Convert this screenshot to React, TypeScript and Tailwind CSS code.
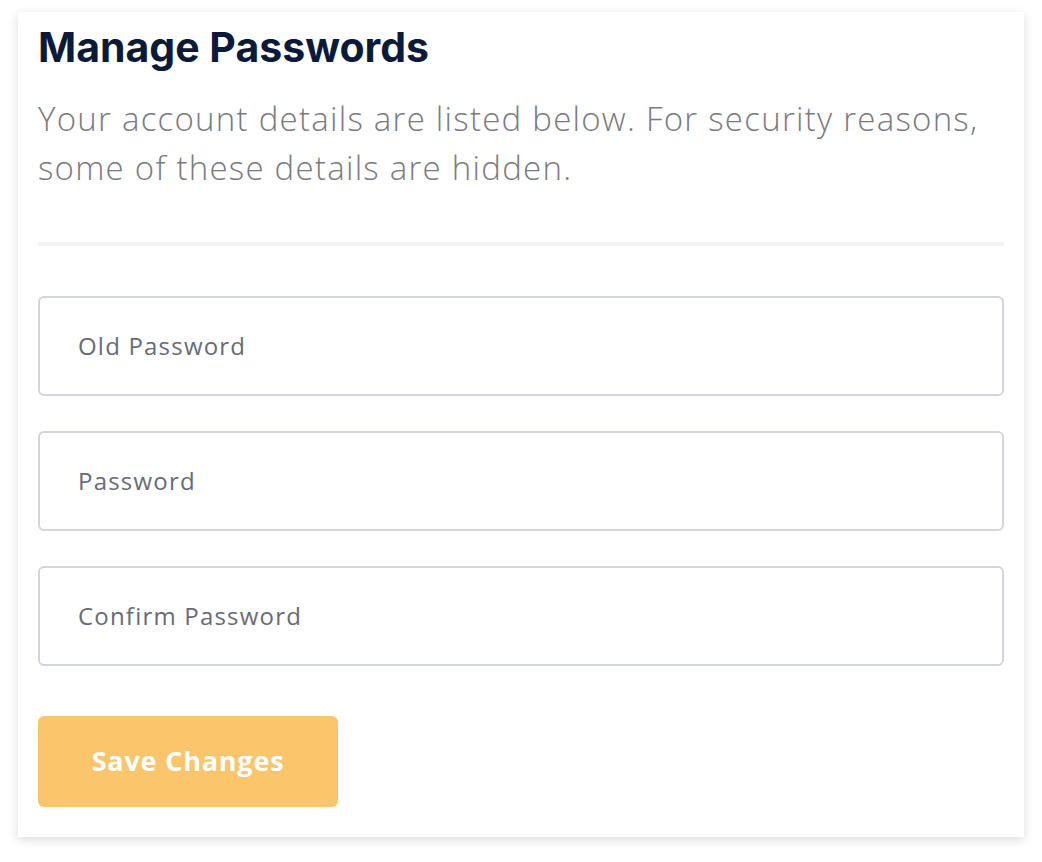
/* ── Manage Passwords card ─────────────────────────────── */

const fields = ['Old Password', 'Password', 'Confirm Password'];

export default function App() {
  return (
    <div className="min-h-screen bg-white pt-[12px] pl-[18px]">
      <div className="w-[1006px] bg-white px-[20px] pt-[11px] pb-[30px] shadow-[0_3px_10px_rgba(0,0,0,0.14)]">
        {/* Header */}
        <h1 className="font-['Inter',sans-serif] text-[41px] leading-[48px] font-bold text-[#0b1a38]">
          Manage Passwords
        </h1>
        <p className="mt-[23px] font-['Open_Sans',sans-serif] text-[33px] leading-[49px] font-light tracking-[1.25px] text-[#7a7a80]">
          Your account details are listed below. For security reasons,
          <br />
          some of these details are hidden.
        </p>

        <div className="mt-[50px] h-[4px] bg-[#f2f2f3]" />

        {/* Fields */}
        <div className="mt-[50px] flex flex-col gap-[35px]">
          {fields.map((f) => (
            <div
              key={f}
              className="flex h-[100px] items-center rounded-[6px] border-2 border-[#d3d5dc] px-[38px]"
            >
              <span className="font-['Open_Sans',sans-serif] text-[24px] font-medium tracking-[1.2px] text-[#686b76]">{f}</span>
            </div>
          ))}
        </div>

        <button className="mt-[50px] flex h-[91px] w-[300px] items-center justify-center rounded-[6px] bg-[#fbc56b] font-['Open_Sans',sans-serif] text-[27px] font-bold tracking-[0.8px] text-white">
          Save Changes
        </button>
      </div>
    </div>
  );
}
